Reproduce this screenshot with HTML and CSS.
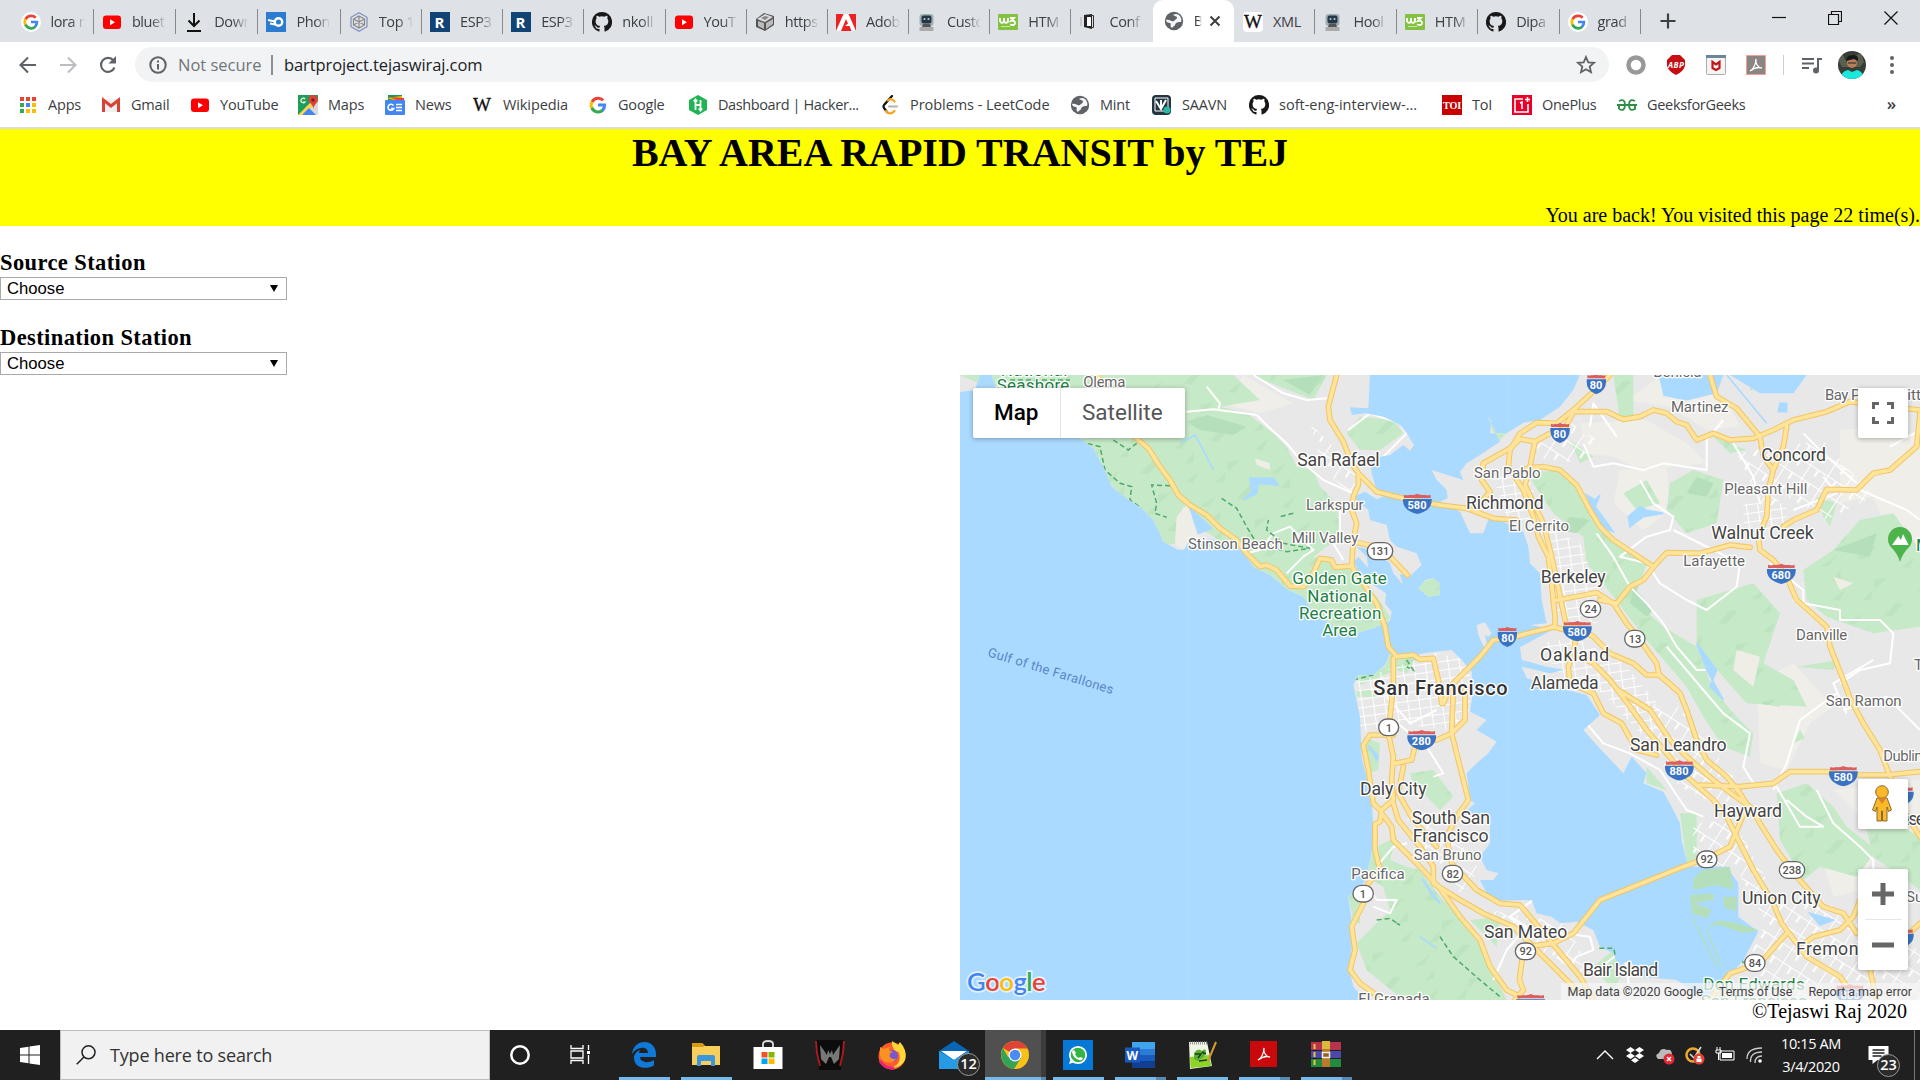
FILE: index.html
```html
<!DOCTYPE html>
<html lang="en">
<head>
<meta charset="utf-8">
<title>BART</title>
<link rel="stylesheet" href="styles.css">
</head>
<body>
<svg class="defs" width="0" height="0">
  <symbol id="google" viewBox="0 0 20 20"><g fill="none" stroke-width="3"><path d="M15.2 5.2A7 7 0 0 0 4 7" stroke="#ea4335"/><path d="M4 6.6a7 7 0 0 0 0 6.6" stroke="#fbbc05"/><path d="M3.8 13a7 7 0 0 0 11 2.2" stroke="#34a853"/><path d="M10 10h6.6a7 7 0 0 1-2.2 5.4" stroke="#4285f4"/></g></symbol>
  <symbol id="googleDisc" viewBox="0 0 20 20"><circle cx="10" cy="10" r="10" fill="#fff"/><use href="#google" x="1" y="1" width="18" height="18"/></symbol>
  <symbol id="youtube" viewBox="0 0 20 20"><rect x="1" y="3.500" width="18" height="13.500" rx="3" fill="#f00"/><path d="M8 7.300v6l5-3z" fill="#fff"/></symbol>
  <symbol id="download" viewBox="0 0 20 20"><path d="M10 1v13M4.500 8.500L10 14l5.500-5.500M3 19h14" fill="none" stroke="#111" stroke-width="2"/></symbol>
  <symbol id="phone" viewBox="0 0 20 20"><path fill="#2b7bd0" d="M0 0h20v20H0z"/><circle cx="12.500" cy="10" r="3.700" fill="none" stroke="#fff" stroke-width="2.400"/><path d="M2 8l7 1.500M4 11.500l5 1" stroke="#fff" stroke-width="2"/></symbol>
  <symbol id="hex" viewBox="0 0 20 20"><g fill="none" stroke="#7f8ebc" stroke-width="1.200"><path d="M10 .7l8 4.600v9.400l-8 4.600-8-4.600V5.300z"/><path d="M10 4l5.500 3v6L10 16l-5.500-3V7zM10 4v12M4.500 7l11 6M15.500 7l-11 6" stroke="#888"/></g></symbol>
  <symbol id="r" viewBox="0 0 20 20"><path fill="#0f4474" d="M0 0h20v20H0z"/><text x="4.500" y="15.500" class="r-letter">R</text></symbol>
  <symbol id="github" viewBox="0 0 20 20"><path fill="#191717" d="M10 0a10 10 0 0 0-3.200 19.500c.6.100.700-.3.700-.6v-2c-2.900.6-3.500-1.200-3.500-1.200-.5-1.200-1.100-1.500-1.100-1.500-.9-.6 0-.6 0-.6 1 .1 1.600 1 1.600 1 .9 1.600 2.400 1.100 3 .9.1-.7.400-1.100.6-1.400-2.300-.3-4.500-1.200-4.500-5 0-1 .3-2 1-2.700-.1-.3-.5-1.300.1-2.700 0 0 .8-.3 2.700 1a9.600 9.600 0 0 1 5 0c2-1.300 2.800-1 2.800-1 .6 1.400.2 2.400.1 2.700.7.700 1 1.600 1 2.700 0 3.800-2.300 4.700-4.500 5 .4.300.7.900.7 1.800v3c0 .3.200.7.700.6A10 10 0 0 0 10 0z"/></symbol>
  <symbol id="cube" viewBox="0 0 20 20"><path d="M1 7l8-6 10 3v9l-9 6-9-4z" fill="#555"/><path d="M2 7l8-5 8 3-8 5z" fill="#ddd"/><path d="M3 9l6 2v6l-6-3zM11 11l7-4v5l-7 5z" fill="#bbb"/><path d="M6 6l4-2 4 1-4 3z" fill="#888"/></symbol>
  <symbol id="adobe" viewBox="0 0 20 20"><path fill="#ed2224" d="M0 2h20v17H0z"/><path d="M0 19L7.500 2h5L20 19h-4.500l-2-5H9l3-2.500L10 7 5 19z" fill="#fff"/></symbol>
  <symbol id="robot" viewBox="0 0 20 20"><rect x="2.500" y="2" width="14" height="12" rx="3" fill="#9eb0b5"/><rect x="4.500" y="3.500" width="10" height="8" rx="2" fill="#263645"/><circle cx="7.500" cy="7" r="1.100" fill="#9ed2e0"/><circle cx="11.500" cy="7" r="1.100" fill="#9ed2e0"/><path d="M2.500 15h14v4h-14z" fill="#aaa"/><path d="M6 12h7l1 3H5z" fill="#555"/></symbol>
  <symbol id="w3" viewBox="0 0 20 20"><rect y="2" width="20" height="16" rx="1" fill="#83c140"/><path d="M2 6v3q2 4 4 0V6v3q2 4 4 0V6M12 6h4l-3 3q4-1 4 2t-5 1.500" fill="none" stroke="#fff" stroke-width="1.800"/><path d="M3 14.500h9" stroke="#cbe6ab" stroke-width="1"/></symbol>
  <symbol id="conf" viewBox="0 0 20 20"><path d="M5 3l8-1v15l-8-2z" fill="#222"/><path d="M8 5h4v9H8z" fill="#fff"/><path d="M12 3.500h2.500v12H12" fill="none" stroke="#333"/><path d="M2 5v9" stroke="#aaa" stroke-width="1"/></symbol>
  <symbol id="globe" viewBox="0 0 20 20"><circle cx="10" cy="10" r="9.200" fill="#5f6368"/><path d="M2 9c4-1 5 2 8 1 1-2 3-1 3-4l-4-2c3-2 5-1 7 1 1 2 2 4 1 6-3 0-5 0-6 3-1 2-2 1-3 3-3-2 0-4-2-5-2 0-4-1-4-3z" fill="#f5f6f7"/></symbol>
  <symbol id="wiki" viewBox="0 0 20 20"><text x="0" y="16" class="w-letter" textLength="19">W</text></symbol>
  <symbol id="wikiTile" viewBox="0 0 20 20"><rect width="20" height="20" rx="4" fill="#fff"/><text x="1" y="16" class="w-letter" textLength="18">W</text></symbol>
  <symbol id="apps" viewBox="0 0 20 20"><path d="M2 2h4v4H2zM8 2h4v4H8zM14 2h4v4h-4z" fill="#ea4335"/><path d="M2 8h4v4H2z" fill="#34a853"/><path d="M8 8h4v4H8z" fill="#4285f4"/><path d="M14 8h4v4h-4zM8 14h4v4H8zM14 14h4v4h-4z" fill="#fbbc05"/><path d="M2 14h4v4H2z" fill="#34a853"/></symbol>
  <symbol id="gmail" viewBox="0 0 20 20"><path d="M1 4h18v13H1z" fill="#f0f0f0"/><path d="M2.500 17V5l7.500 6 7.500-6v12" fill="none" stroke="#d94235" stroke-width="3"/></symbol>
  <symbol id="maps" viewBox="0 0 20 20"><path fill="#1e9e57" d="M0 0h20v20H0z"/><path d="M20 4v16h-4L8 12z" fill="#dadada"/><path d="M0 20L16 4l3 3L6 20z" fill="#fdd454"/><path d="M4 20l7-7 7 7z" fill="#4285f4"/><path d="M15 0a5 5 0 0 1 5 5c0 3-4 4-4.500 9C15 9 10.500 8 10.500 5A5 5 0 0 1 15 0z" fill="#db4437"/><circle cx="15" cy="5" r="1.700" fill="#7b231e"/><path d="M7 4a2.300 2.300 0 1 0 0 3H5" fill="none" stroke="#fff" stroke-width="1.200"/></symbol>
  <symbol id="news" viewBox="0 0 20 20"><path d="M3 0h14v6H3z" fill="#0f9d58"/><path d="M1 3l16-2v6z" fill="#fbbc04"/><path d="M4 2l15 1v5z" fill="#ea4335"/><rect y="5" width="20" height="15" rx="1" fill="#4285f4"/><path d="M8.500 10.500a3 3 0 1 0 .3 3H6M11 9.500h6M11 12.500h6M11 15.500h6" fill="none" stroke="#fff" stroke-width="1.600"/></symbol>
  <symbol id="hacker" viewBox="0 0 20 20"><path d="M10 0l9 5v10l-9 5-9-5V5z" fill="#1fb554"/><path d="M7.500 5v10M12.500 5v10M7.500 10h5M5.800 6.500L7.500 4.500l1.700 2M10.800 13.500l1.700 2 1.700-2" fill="none" stroke="#fff" stroke-width="1.800"/></symbol>
  <symbol id="leet" viewBox="0 0 20 20"><g fill="none" stroke-width="2.200" stroke-linecap="round"><path d="M12 1L4 10q-1 1.500 0 3l3 4" stroke="#111"/><path d="M8 5.500q3-3 6.500 1M6 16q4 5 8.500 0" stroke="#ffa116"/><path d="M9 11.500h8" stroke="#b3b3b3"/></g></symbol>
  <symbol id="saavn" viewBox="0 0 20 20"><rect width="19" height="20" rx="4" fill="#223641"/><path d="M3 3h13v13H3z" fill="none" stroke="#fff"/><path d="M4 6l5 8 5-9M9 5v7" fill="none" stroke="#fff" stroke-width="2"/><circle cx="15" cy="15" r="3.500" fill="#2bb9a5"/></symbol>
  <symbol id="toi" viewBox="0 0 20 20"><path fill="#c80000" d="M0 0h20v20H0z"/><text x="1" y="14" class="toi-text" textLength="18" lengthAdjust="spacingAndGlyphs">TOI</text></symbol>
  <symbol id="oneplus" viewBox="0 0 20 20"><path fill="#eb0029" d="M0 0h20v20H0z"/><path d="M11 4H3v13h13V9M8 8l2-1v7M15.500 2v5M13 4.500h5" fill="none" stroke="#fff" stroke-width="1.600"/></symbol>
  <symbol id="gfg" viewBox="0 0 20 20"><path d="M0 10h20M2 6q6-3 6 4t-6 4M18 6q-6-3-6 4t6 4v-4M2 14v-4" fill="none" stroke="#2f8d46" stroke-width="1.900"/></symbol>
  <symbol id="acro" viewBox="0 0 20 20"><path d="M4 16c3-1 6-7 6-12-1 4 2 9 6 9-3-1-8 0-12 3z" fill="none" stroke="#fff" stroke-width="1.300"/></symbol>

  <symbol id="interstate" viewBox="0 0 88 62"><path d="M1 17h86q3 34-43 45Q-2 51 1 17z" fill="#3b73c4"/><path d="M4 4q10 3 18 0 10 3 22-3 12 6 22 3 8 3 18 0v10H4z" fill="#db5f5f"/></symbol>
  <symbol id="interstateNarrow" viewBox="0 0 60 62"><path d="M1 17h58q3 34-29 45Q-2 51 1 17z" fill="#3b73c4"/><path d="M3 4q7 3 13 0 7 3 14-3 7 6 14 3 6 3 13 0v10H3z" fill="#db5f5f"/></symbol>
</svg>

<header class="browser">
  <nav class="tabs">
    <div class="tab"><svg><use href="#googleDisc"/></svg><span>lora m</span></div>
    <div class="tab"><svg><use href="#youtube"/></svg><span>bluet</span></div>
    <div class="tab"><svg><use href="#download"/></svg><span>Down</span></div>
    <div class="tab"><svg><use href="#phone"/></svg><span>Phon</span></div>
    <div class="tab"><svg><use href="#hex"/></svg><span>Top 1</span></div>
    <div class="tab"><svg><use href="#r"/></svg><span>ESP3</span></div>
    <div class="tab"><svg><use href="#r"/></svg><span>ESP3</span></div>
    <div class="tab"><svg><use href="#github"/></svg><span>nkoll</span></div>
    <div class="tab"><svg><use href="#youtube"/></svg><span>YouT</span></div>
    <div class="tab"><svg><use href="#cube"/></svg><span>https</span></div>
    <div class="tab"><svg><use href="#adobe"/></svg><span>Adob</span></div>
    <div class="tab"><svg><use href="#robot"/></svg><span>Custo</span></div>
    <div class="tab"><svg><use href="#w3"/></svg><span>HTM</span></div>
    <div class="tab last"><svg><use href="#conf"/></svg><span>Conf</span></div>
    <div class="tab active"><svg><use href="#globe"/></svg><span>B</span><svg class="x" viewBox="0 0 12 12"><path d="M1.500 1.500l9 9M10.500 1.500l-9 9"/></svg></div>
    <div class="tab"><svg><use href="#wikiTile"/></svg><span class="whole">XML</span></div>
    <div class="tab"><svg><use href="#robot"/></svg><span>Hool</span></div>
    <div class="tab"><svg><use href="#w3"/></svg><span>HTM</span></div>
    <div class="tab"><svg><use href="#github"/></svg><span>Dipa</span></div>
    <div class="tab"><svg><use href="#googleDisc"/></svg><span>grad</span></div>
    <svg class="plus" viewBox="0 0 16 16"><path d="M8 .5v15M.5 8h15"/></svg>
    <div class="window-buttons">
      <svg viewBox="0 0 14 14"><path d="M0 6.500h14"/></svg>
      <svg viewBox="0 0 14 14"><path d="M.5 3.500h10v10H.5zM3.500 3V.5h10v10H11"/></svg>
      <svg viewBox="0 0 14 14"><path d="M.5.5l13 13M13.500.5l-13 13"/></svg>
    </div>
  </nav>

  <div class="toolbar">
    <svg class="nav" viewBox="0 0 18 18"><path d="M17 9H2M9 1.500L1.500 9 9 16.500"/></svg>
    <svg class="nav dim" viewBox="0 0 18 18"><path d="M1 9h15M9 1.500L16.500 9 9 16.500"/></svg>
    <svg class="nav" viewBox="0 0 18 18"><path d="M15.500 11.500A7 7 0 1 1 14.500 4.500"/><path d="M17 0v7.500H9.500z" class="solid"/></svg>
    <div class="address">
      <svg class="info" viewBox="0 0 18 18"><circle cx="9" cy="9" r="7.700"/><path d="M9 8v5.500M9 4.500v2"/></svg>
      <span class="insecure">Not secure</span><i></i><span class="url">bartproject.tejaswiraj.com</span>
      <svg class="star" viewBox="0 0 20 20"><path d="M10 2l2.300 5.300 5.700.5-4.300 3.800 1.300 5.600-5-3-5 3 1.300-5.600L2 7.800l5.700-.5z"/></svg>
    </div>
    <div class="extensions">
      <svg viewBox="0 0 20 20"><circle cx="10" cy="10" r="7.500" fill="none" stroke="#999" stroke-width="4.500"/></svg>
      <svg viewBox="0 0 20 20"><path d="M6 0h8l5 5v6q-2 6-9 9-7-3-9-9V5z" fill="#c70d12"/><text x="2" y="13" class="abp" textLength="16">ABP</text></svg>
      <svg viewBox="0 0 20 20"><rect x=".5" y=".5" width="19" height="19" rx="1" fill="#f4f4f4" stroke="#aaa"/><path d="M0 0h20v3H0z" fill="#6b8797"/><path d="M6.500 7v6l3.500 2 3.500-2V7L10 9.500z" fill="none" stroke="#c01818" stroke-width="2.200"/></svg>
      <svg viewBox="0 0 20 20"><path d="M.5.5h19v19H.5z" fill="#8c8585" stroke="#f2a090"/><use href="#acro"/></svg>
    </div>
    <i class="rule"></i>
    <svg class="queue" viewBox="0 0 20 20"><path d="M0 4h12M0 8.500h12M0 13h7M16 15V4h4" fill="none" stroke="#5f6368" stroke-width="2"/><circle cx="14" cy="15.500" r="3" fill="#5f6368"/></svg>
    <svg class="avatar" viewBox="0 0 28 28"><clipPath id="round"><circle cx="14" cy="14" r="14"/></clipPath><g clip-path="url(#round)"><path d="M0 0h28v28H0z" fill="#343e34"/><path d="M0 8l5-4 3 6 5-7 4 2 6-3 3 9-4 5H4z" fill="#59604e"/><circle cx="14" cy="12" r="5" fill="#b77e5c"/><path d="M8 10q1-7 7-6 6 0 5 6l-4-2z" fill="#181818"/><path d="M10 12h8" stroke="#222" stroke-width="1.200"/><path d="M3 28q0-8 7-9l4 2 5-2q6 1 7 9z" fill="#19e8dc"/></g></svg>
    <svg class="dots" viewBox="0 0 4 18"><circle cx="2" cy="2" r="2"/><circle cx="2" cy="9" r="2"/><circle cx="2" cy="16" r="2"/></svg>
  </div>

  <div class="bookmarks">
    <a><svg><use href="#apps"/></svg>Apps</a>
    <a><svg><use href="#gmail"/></svg>Gmail</a>
    <a><svg><use href="#youtube"/></svg>YouTube</a>
    <a><svg><use href="#maps"/></svg>Maps</a>
    <a><svg><use href="#news"/></svg>News</a>
    <a><svg><use href="#wiki"/></svg>Wikipedia</a>
    <a><svg><use href="#google"/></svg>Google</a>
    <a><svg><use href="#hacker"/></svg>Dashboard | Hacker...</a>
    <a><svg><use href="#leet"/></svg>Problems - LeetCode</a>
    <a><svg><use href="#globe"/></svg>Mint</a>
    <a><svg><use href="#saavn"/></svg>SAAVN</a>
    <a><svg><use href="#github"/></svg>soft-eng-interview-...</a>
    <a><svg><use href="#toi"/></svg>ToI</a>
    <a><svg><use href="#oneplus"/></svg>OnePlus</a>
    <a><svg><use href="#gfg"/></svg>GeeksforGeeks</a>
    <b>»</b>
  </div>
</header>

<main class="page">
  <div class="banner">
    <h1>BAY AREA RAPID TRANSIT by TEJ</h1>
    <p>You are back! You visited this page 22 time(s).</p>
  </div>
  <div class="field">
    <h3>Source Station</h3>
    <div class="select"><span>Choose</span><i></i></div>
  </div>
  <div class="field">
    <h3>Destination Station</h3>
    <div class="select"><span>Choose</span><i></i></div>
  </div>

  <div class="map">
    <svg class="tiles" viewBox="0 15 2880 1875">
      <defs>
        <pattern id="grid" width="34" height="26" patternUnits="userSpaceOnUse" patternTransform="rotate(-8)"><path d="M0 0h34M0 0v26" stroke="#fff" stroke-width="6" fill="none"/></pattern>
        <pattern id="gridWide" width="62" height="48" patternUnits="userSpaceOnUse" patternTransform="rotate(33)"><path d="M0 0h62M0 0v48M30 0v24" stroke="#fff" stroke-width="6" fill="none"/></pattern>
        <pattern id="relief" width="230" height="190" patternUnits="userSpaceOnUse" patternTransform="rotate(-25)"><path d="M10 20l50-12-30 24zM90 60l45-16-20 26zM20 105l60-9-38 20zM150 20l40 10-50 16zM130 130l50-20 20 12-50 20zM30 160l40-20-10 26z" fill="#b3dfb8" opacity=".5"/></pattern>
        <clipPath id="landClip"><use href="#landShape"/></clipPath>
        <path id="landShape" d="M0 15H60L45 60 0 66ZM95 15L110 60 250 160 360 205 400 235 435 300 455 350 500 385 545 415 580 450 600 490 610 515 655 540 672 538 685 515 750 508 800 515 850 545 880 590 930 615 985 660 1030 680 1060 730 1110 760 1130 785 1180 792 1240 775 1290 752 1295 725 1275 700 1278 670 1240 645 1195 605 1182 575 1195 560 1225 595 1220 560 1190 530 1240 540 1290 580 1300 610 1330 645 1318 612 1350 618 1385 585 1370 550 1310 530 1290 510 1280 465 1230 450 1225 420 1200 400 1180 380 1215 365 1250 388 1280 375 1250 360 1235 310 1230 265 1290 255 1330 225 1350 242 1362 225 1340 190 1320 165 1270 140 1215 130 1175 135 1170 112 1225 115 1230 15Z
        M1180 945L1195 915 1240 915 1275 885 1290 850 1330 862 1400 848 1475 840 1505 870 1535 905 1540 960 1530 1025 1580 1050 1550 1080 1610 1115 1585 1150 1550 1180 1520 1210 1530 1290 1545 1300 1510 1330 1590 1345 1590 1420 1560 1460 1580 1500 1615 1510 1600 1530 1560 1530 1580 1570 1610 1592 1715 1590 1730 1630 1775 1640 1800 1660 1850 1655 1900 1680 1920 1730 1960 1750 1975 1790 2010 1770 2040 1820 2150 1830 2240 1890 1215 1890 1180 1850 1168 1800 1178 1710 1175 1650 1165 1580 1215 1535 1235 1450 1240 1365 1235 1290 1205 1160 1200 1040Z
        M1860 15L1840 60 1800 110 1740 150 1690 158 1640 190 1590 190 1595 155 1583 138 1620 215 1560 255 1520 280 1500 305 1510 330 1415 300 1430 330 1460 360 1463 385 1440 395 1500 425 1530 490 1570 490 1590 435 1640 460 1690 485 1705 530 1710 580 1740 610 1745 690 1760 760 1710 765 1780 778 1720 810 1680 832 1685 870 1760 890 1815 900 1770 910 1685 890 1700 925 1790 952 1880 975 1920 1035 1870 1080 1915 1130 1990 1210 2015 1160 2060 1210 2050 1240 2110 1265 2135 1310 2160 1360 2165 1410 2175 1450 2185 1490 2300 1490 2335 1540 2335 1640 2395 1685 2350 1770 2300 1830 2240 1890H2880V15H2540L2500 70 2400 70 2310 15H2290L2270 70 2180 92 2110 78 2095 15Z
        M1550 765L1575 757 1595 790 1585 800 1575 795 1582 830 1570 828 1555 795ZM1375 655L1395 630 1420 625 1438 640 1440 675 1405 680Z"/>
        <g id="parks">
          <path d="M0 15H820L900 90 780 110 860 130 940 190 980 230 1010 290 1060 300 1080 350 1130 400 1140 500 1060 560 1170 600 1250 680 1290 740 1260 800 1040 800 940 640 850 560 700 460 670 410 650 450 650 520 600 530 340 200 100 60ZM870 15H1100L1060 90 960 50ZM1160 190L1200 140 1300 150 1330 190 1260 240 1200 240ZM1370 640L1440 620V690H1370Z"/>
          <path d="M1180 910L1275 890 1290 850 1370 865 1340 910 1310 900 1200 945ZM1210 1100L1260 1120 1255 1200 1225 1210ZM1350 1210L1420 1200 1480 1280 1440 1320 1360 1240ZM1190 960H1260V980H1190ZM1230 1440L1310 1400 1290 1470 1340 1490 1380 1500 1440 1580 1520 1660 1580 1760 1640 1890H1330L1220 1800 1190 1720 1290 1620 1270 1550 1220 1520ZM1530 1650L1620 1640 1610 1730 1570 1690ZM1165 1570H1200V1660H1180Z"/>
          <path d="M1580 130L1640 190 1610 220ZM1700 310L1790 300 1860 360 1900 450 1980 520 2060 580 2040 640 2020 690 2110 770 2210 830 2260 960 2330 1040 2380 1090 2370 1160 2290 1130 2230 1040 2180 950 2060 810 1960 680 1880 580 1870 500 1780 430ZM2130 340L2200 300 2290 330 2270 460 2180 490 2120 420ZM2210 690L2380 640 2460 730 2410 880 2500 930 2540 1010 2360 1000 2210 830ZM2530 600L2620 540 2700 450 2800 430 2880 540V770L2740 790 2600 740 2540 690ZM2450 1270L2540 1240 2620 1310 2660 1370 2750 1440 2690 1520 2580 1490 2530 1530 2460 1410ZM2700 1300L2880 1400V1560L2740 1460ZM1960 15H2020V150H1980ZM1830 210L1900 260 1860 280ZM2160 1330H2210V1480H2180ZM2310 1700L2380 1690 2340 1780ZM2060 1190L2120 1260 2060 1240Z"/>
          <path d="M1990 370L2060 330 2100 400 2030 420ZM2260 200L2360 240 2310 250ZM2570 380L2630 400 2610 470 2590 440ZM2380 25L2430 50 2370 60ZM2510 890L2640 870 2620 900ZM2390 1000L2470 980 2460 1010ZM2500 1120L2520 1080 2535 1105ZM1900 1790L1960 1740 2000 1790 1960 1860Z"/>
        </g>
        <g id="roadLines" fill="none" stroke-linejoin="round" stroke-linecap="round">
          <path d="M415 15L430 100 530 205 565 235 600 290 630 330 655 375 690 405 740 435 780 475 830 510 860 550 900 590 918 585 950 600 990 648 1030 650 1060 610 1080 565 1115 570 1125 592 1175 588"/>
          <path d="M1130 15L1118 60 1105 110 1110 150 1150 215 1175 280 1195 310 1195 345 1180 380 1175 420 1190 460 1180 510 1175 590 1210 640 1250 700 1275 770 1285 830 1310 860 1360 855 1380 868 1420 865 1435 930 1445 1000M1180 515L1250 530 1295 565 1342 615M1195 310L1250 365 1330 385 1440 405 1520 415 1600 445 1670 450M1300 865V950L1285 1090 1300 1160"/>
          <path d="M1950 15L1905 60 1840 120 1790 160 1730 158 1680 190 1650 240 1645 290 1690 360 1720 440 1735 500 1765 560 1775 640 1785 740 1785 770 1720 785 1650 805 1600 810 1560 860 1510 910 1470 950 1450 1000"/>
          <path d="M1840 125L1815 175 1770 190 1725 215 1710 290 1695 345 1750 460 1775 560 1800 680 1820 770M1725 215L1680 207 1650 235 1570 280 1565 330 1590 365 1560 400M1840 125L1940 125 1990 148 2040 140 2080 120 2120 130 2150 155 2180 165 2210 210 2260 190 2310 210 2380 205 2440 180 2500 150 2600 125 2670 95 2780 110 2880 120"/>
          <path d="M2250 15L2270 80 2330 115 2400 200 2410 260 2440 300 2425 360 2420 440 2395 500 2400 540 2440 570 2480 620 2510 690 2600 770 2610 830 2650 930 2670 985 2710 1060 2760 1140 2790 1220 2830 1320 2880 1400M2480 170L2470 230 2440 300M2880 130L2870 230 2790 300 2740 310 2690 360 2600 358 2570 420 2500 450 2470 470"/>
          <path d="M2370 532L2310 525 2220 550 2120 548 2090 580 2050 630 2010 650 1970 700 1920 690M1700 295L1750 290 1800 300 1850 345 1890 420 1920 470 1960 510 2020 550 2080 590M1780 693L1830 683 1910 668 1960 700 2000 760 2040 810 2090 880 2097 915 2150 960"/>
          <path d="M1820 770L1850 770 1900 800 1950 850 2020 880 2060 915 2100 915 2160 970 2180 1020 2210 1110 2240 1170 2300 1220 2340 1270 2365 1310M2220 1245L2340 1250 2440 1240 2490 1205 2600 1205 2660 1215 2780 1215 2880 1205"/>
          <path d="M1780 770L1850 790 1840 850 1900 880 1950 930 2010 1010 2060 1080 2120 1150 2170 1210 2260 1290 2300 1340 2330 1400 2380 1500 2440 1600 2465 1660 2540 1760 2640 1820 2690 1890M1975 960L2070 1020 2130 1110 2180 1160 2260 1230 2320 1275 2370 1310 2400 1360 2450 1440 2510 1520 2590 1610 2650 1630 2690 1690M1840 850L1825 890 1830 940 1900 970 1930 1030 1985 1060 2030 1140 2090 1155"/>
          <path d="M1700 1730L1780 1720 1840 1690 1920 1590 2170 1490 2240 1465 2310 1430 2360 1310M2250 1890L2310 1810 2400 1780 2480 1690M2540 1715L2560 1700 2640 1680 2680 1640 2700 1590M2880 1660L2730 1800 2750 1890"/>
          <path d="M1300 1095L1230 1095 1210 1125 1225 1200 1240 1300 1260 1320M1300 1160L1295 1230 1300 1290 1265 1320 1260 1355 1245 1362 1245 1440 1260 1500 1225 1540M1365 1130L1355 1170 1305 1180M1265 1330L1295 1370 1300 1410 1380 1490 1440 1555 1500 1640 1560 1710 1590 1790 1640 1860 1670 1875M1330 1190L1315 1270 1360 1350 1430 1430M1430 1110L1475 1090 1515 1050 1515 960"/>
          <path d="M1480 960L1475 1090 1500 1190 1525 1290 1490 1340 1460 1400 1475 1480 1550 1560 1620 1600 1680 1605 1760 1700 1860 1820 1900 1890M1300 1300L1315 1350 1380 1430 1420 1490 1420 1540 1500 1590 1570 1630 1660 1670 1730 1740 1850 1860M1210 1600L1175 1670 1185 1740 1170 1800 1200 1840 1270 1890M1690 1740L1678 1830 1690 1860 1665 1890"/>
        </g>
      </defs>
      <path d="M0 15H2880V1890H0Z" fill="#aadaff"/>
      <path d="M685 15V1890M1646 15V1890" stroke="#b5defb" stroke-width="3"/>
      <use href="#landShape" fill="#e8e8e8"/>
      <g clip-path="url(#landClip)">
        <g fill="#f0eee9">
          <path d="M1860 160L2060 150 2180 220 2240 280 2120 290 2020 290 1960 260 1880 250ZM2100 20L2300 90 2340 170 2240 180 2130 110 2000 90ZM2640 180L2780 170 2880 200V520L2780 480 2740 380 2640 400ZM2390 940L2500 880 2620 1010 2550 1060 2480 1200 2400 1180ZM2620 1260L2880 1230V1420L2740 1380ZM2580 1450L2740 1460 2700 1560 2620 1580ZM1980 300L2120 290 2130 420 2050 480 1960 400ZM2270 700L2400 680 2440 760 2400 860 2300 820Z"/>
          <path d="M850 15L1000 100 900 130 780 100Z"/>
        </g>
        <use href="#parks" fill="#c6e9c7"/>
        <use href="#parks" fill="url(#relief)"/>
        <path d="M650 440L680 405 700 440 720 500 670 540 645 520ZM885 265L930 280 930 300 890 285ZM2330 840L2400 860 2380 950 2320 900ZM2620 620L2680 640 2640 660Z" fill="#efeee6"/>
        <g fill="#b4dfba"><path d="M680 155L740 135 860 170 820 195 720 180ZM970 30L1090 15 1050 75ZM1830 440L1890 450 1850 490 1800 480ZM2020 650L2080 720 2060 740 2010 700ZM2620 540L2750 490 2730 560ZM2210 320L2260 340 2240 380 2180 370Z"/></g>
        <g fill="url(#grid)"><path d="M1190 930L1430 850 1530 870 1530 1020 1470 1080 1300 1060 1200 1090ZM1600 320L1700 310 1760 470 1860 520 1920 660 1910 760 1790 740 1740 480 1640 440ZM1740 820L1840 800 1990 880 2100 1010 2080 1130 1930 970 1800 920ZM2350 400H2480V480H2350Z"/></g>
        <g fill="url(#gridWide)"><path d="M2080 1000L2160 1010 2320 1220 2300 1320 2160 1250 2080 1150ZM2200 1360L2320 1350 2460 1600 2420 1660 2320 1480 2290 1490 2200 1450ZM2440 1600L2560 1570 2680 1650 2880 1740V1890H2440L2370 1760ZM2330 250L2590 210 2740 380 2600 450 2480 380 2410 420ZM1330 1330L1450 1350 1560 1500 1500 1570 1400 1450ZM1590 1620L1820 1660 1900 1830 1730 1740 1620 1680ZM1050 160L1130 240 1220 320 1170 370 1090 300ZM1900 60L1840 190 1910 200 1870 280 1700 260Z"/></g>
        <g fill="none" stroke="#fff" stroke-width="6" stroke-linejoin="round">
          <path d="M680 125L760 118 890 135 930 175 980 220 1030 280 1090 330 1180 370M740 50L780 100 775 120M880 15L970 70 1040 90 1100 85M1165 180L1230 130 1320 160 1340 190 1270 260 1180 280M1140 400V480L1120 520 1150 570M980 610L1030 560 1060 540 1040 520 990 470 940 490 900 540 860 550"/>
          <path d="M1870 220L1900 290 1960 280 2050 300 2110 280 2240 300 2240 210 2290 150M2040 330L2080 400 2140 440 2130 480 2060 500 1980 560 2060 580 2100 640 2180 690 2240 720 2330 650 2340 580 2260 540 2140 480M1910 490L1960 560 2010 650 2060 700 2110 760 2150 830 2210 900 2270 900M2320 220L2380 320 2400 400M2530 190L2590 250 2690 340M2590 320L2630 370 2500 420M2430 580L2530 660 2530 700 2640 720 2640 750 2760 750 2800 790 2790 880 2700 900 2640 940M2500 690L2580 760M2790 230L2880 180M2700 360L2840 420 2880 450"/>
          <path d="M2120 830L2230 960 2290 1030 2370 1090 2350 1190 2380 1240M2630 970L2520 1050 2480 1180 2440 1260M2480 1290L2540 1340 2590 1370 2520 1370 2450 1250M2570 1260L2620 1360 2700 1430 2740 1470V1540M2740 870L2620 940 2660 1030M1720 1590L1650 1640 1700 1670 1640 1740 1600 1830M1810 1690L1890 1700 1900 1740 1850 1760 1830 1790 1790 1760M1900 1810L1950 1770 1990 1740 2010 1860M1225 1550L1250 1590 1310 1590 1290 1630 1240 1610M1250 1490L1300 1430 1340 1420M1880 980V1060L1930 1120 2010 1150 2100 1200 2180 1320 2230 1340M1280 980L1350 1060 1430 1020M1300 1050L1400 1130 1450 1210 1420 1220M1890 170L1900 100 1970 200M2650 1020L2780 980 2880 1080"/>
        </g>
        <g fill="#aadaff" stroke="#aadaff" stroke-width="5"><path d="M1880 375L1905 390 1920 375 1905 410 1935 450 1960 485 1920 470ZM2005 440L2040 410 2060 420 2110 430 2050 440 2010 470ZM870 325L940 325 955 345 895 340 890 370 850 390 875 365ZM690 415L755 475 715 490ZM2210 820L2270 900 2250 950 2290 990 2240 900ZM2460 100H2480V125H2455ZM1225 1125L1255 1160 1250 1170ZM1385 1525L1440 1600 1420 1580ZM2550 1630L2620 1650 2580 1665Z"/><path d="M660 220L705 195 730 240 760 300M1380 1700L1430 1735M2300 15L2420 160" fill="none"/></g>
        <g class="trail"><path d="M360 215L420 230 435 300 480 340 515 350 510 390 545 415M460 210L505 240 530 220M630 347L575 345 590 400 585 430 620 442M785 385L830 415 860 470 890 520 980 545 1050 535 970 520 920 480 925 450M1000 430L960 440M1250 1650L1290 1645 1320 1665 1310 1660M1440 1700L1480 1760 1560 1830 1620 1880M1340 870L1360 900 1340 890M1180 930L1240 915M2330 1720L2350 1780M150 30H330"/></g>
      </g>
      <path d="M2200 1525L2230 1500 2310 1490 2320 1560 2270 1545 2200 1560ZM2190 1575L2260 1570 2262 1590 2205 1600 2255 1620 2240 1645 2195 1630ZM2290 1580H2330V1625L2290 1610ZM2240 1670L2280 1650 2330 1660 2395 1680 2350 1690 2280 1665Z" fill="#b4dfba"/>
      <path d="M2195 1640L2270 1790M2240 1680L2285 1790" stroke="#b4dfba" stroke-width="4"/>
      <path d="M1918 1735H1962L1966 1762" class="trail"/>
      <use href="#roadLines" stroke="#f2c463" stroke-width="17"/>
      <use href="#roadLines" stroke="#ffe49a" stroke-width="11"/>

      <g class="shields">
        <use href="#interstateNarrow" x="1879" y="11" width="60" height="62"/><use href="#interstateNarrow" x="1770" y="157" width="60" height="62"/><use href="#interstate" x="1328" y="370" width="88" height="62"/><use href="#interstate" x="2420" y="580" width="88" height="62"/><use href="#interstateNarrow" x="1612" y="769" width="60" height="62"/><use href="#interstate" x="1808" y="752" width="88" height="62"/><use href="#interstate" x="1341" y="1079" width="88" height="62"/><use href="#interstate" x="2114" y="1170" width="88" height="62"/><use href="#interstate" x="2606" y="1187" width="88" height="62"/><use href="#interstate" x="2774" y="1248" width="88" height="62"/><use href="#interstate" x="2774" y="1674" width="88" height="62"/><use href="#interstate" x="1668" y="1871" width="88" height="62"/><use href="#interstate" x="2626" y="1842" width="88" height="62"/>
        <text x="1908" y="58">80</text><text x="1799" y="205">80</text><text x="1371" y="416">580</text><text x="2463" y="628">680</text><text x="1643" y="815">80</text><text x="1851" y="799">580</text><text x="1384" y="1125">280</text><text x="2157" y="1216">880</text><text x="2649" y="1233">580</text><text x="2670" y="1888">880</text>
      </g>
      <g class="routes">
        <rect x="1222" y="518" width="76" height="51" rx="25"/><rect x="1861" y="692" width="61" height="50" rx="25"/><rect x="1994" y="781" width="61" height="50" rx="25"/><rect x="1256" y="1047" width="60" height="50" rx="25"/><rect x="1179" y="1546" width="61" height="50" rx="25"/><rect x="1447" y="1486" width="61" height="50" rx="25"/><rect x="2210" y="1443" width="61" height="50" rx="25"/><rect x="2458" y="1475" width="76" height="50" rx="25"/><rect x="2354" y="1754" width="61" height="50" rx="25"/><rect x="1666" y="1719" width="61" height="50" rx="25"/>
        <text x="1260" y="556">131</text><text x="1892" y="730">24</text><text x="2025" y="819">13</text><text x="1287" y="1085">1</text><text x="1209" y="1583">1</text><text x="1478" y="1524">82</text><text x="2240" y="1480">92</text><text x="2496" y="1512">238</text><text x="2385" y="1791">84</text><text x="1697" y="1756">92</text>
      </g>
      <g class="labels">
        <g class="city">
          <text x="1012" y="288" textLength="247">San Rafael</text><text x="1518" y="418" textLength="233">Richmond</text><text x="2404" y="273" textLength="194">Concord</text><text x="2254" y="507" textLength="307">Walnut Creek</text><text x="1742" y="640" textLength="195">Berkeley</text><text x="1740" y="873" textLength="208">Oakland</text><text x="1712" y="957" textLength="204">Alameda</text><text x="2010" y="1143" textLength="290">San Leandro</text><text x="2262" y="1341" textLength="204">Hayward</text><text x="1200" y="1275" textLength="200">Daly City</text><text x="1355" y="1363" textLength="235">South San</text><text x="1358" y="1416" textLength="228">Francisco</text><text x="2346" y="1601" textLength="236">Union City</text><text x="1572" y="1704" textLength="250">San Mateo</text><text x="2508" y="1756" textLength="206">Fremont</text><text x="1869" y="1818" textLength="226">Bair Island</text><text x="2765" y="1365" textLength="130">Please</text>
        </g>
        <g class="town">
          <text x="370" y="51" textLength="126">Olema</text><text x="1038" y="420" textLength="173">Larkspur</text><text x="684" y="537" textLength="284">Stinson Beach</text><text x="995" y="518" textLength="200">Mill Valley</text><text x="1542" y="323" textLength="200">San Pablo</text><text x="1647" y="483" textLength="180">El Cerrito</text><text x="2133" y="125" textLength="172">Martinez</text><text x="2080" y="22" textLength="145">Benicia</text><text x="2595" y="91" textLength="130">Bay Po</text><text x="2842" y="91">itt</text><text x="2293" y="372" textLength="249">Pleasant Hill</text><text x="2170" y="588" textLength="185">Lafayette</text><text x="2508" y="809" textLength="154">Danville</text><text x="2862" y="899">T</text><text x="2597" y="1007" textLength="228">San Ramon</text><text x="2770" y="1174" textLength="118">Dublin</text><text x="2838" y="1595">Su</text><text x="1174" y="1527" textLength="160">Pacifica</text><text x="1361" y="1469" textLength="204">San Bruno</text><text x="1195" y="1903" textLength="214">El Granada</text>
        </g>
        <g class="park"><text x="997" y="642" textLength="283">Golden Gate</text><text x="1042" y="695" textLength="194">National</text><text x="1017" y="747" textLength="247">Recreation</text><text x="1087" y="799" textLength="104">Area</text><text x="110" y="62" textLength="218">Seashore</text><text x="122" y="18" textLength="200">National</text><text x="2230" y="1859" textLength="304">Don Edwards</text><text x="2222" y="1912" textLength="320">San Francisco</text><text x="2868" y="543">M</text></g>
        <text class="metro" x="1240" y="976" textLength="403">San Francisco</text>
        <text class="sea" transform="translate(81 858) rotate(17)" textLength="392">Gulf of the Farallones</text>
      </g>
      <path d="M2820 576Q2813 550 2792 530A36 36 0 1 1 2848 530Q2827 550 2820 576Z" fill="#4db34b"/><path d="M2796 525L2815 498 2823 510 2829 492 2846 525Z" fill="#fff"/>
      <text class="logo" x="21" y="1862" textLength="236"><tspan fill="#4285f4">G</tspan><tspan fill="#ea4335">o</tspan><tspan fill="#fbbc05">o</tspan><tspan fill="#4285f4">g</tspan><tspan fill="#34a853">l</tspan><tspan fill="#ea4335">e</tspan></text>
    </svg>
    <div class="map-type"><b>Map</b><span>Satellite</span></div>
    <div class="control full"><svg viewBox="0 0 22 22"><path d="M1.500 7V1.500H7M15 1.500h5.500V7M20.500 15v5.500H15M7 20.500H1.500V15"/></svg></div>
    <div class="control pegman"><svg viewBox="0 0 22 38"><path d="M6 13L1.500 25l3 1.500L6 22v14h4.500V26h1v10H16V22l1.500 4.500 3-1.500L16 13z"/><circle cx="11" cy="7" r="6.300"/><path d="M7 13h8l-4 6z" class="collar"/></svg></div>
    <div class="control zoom"><svg viewBox="0 0 22 22"><path d="M11 0v22M0 11h22"/></svg><i></i><svg viewBox="0 0 22 22"><path d="M0 11h22"/></svg></div>
    <div class="credits"><span>Map data ©2020 Google</span><span>Terms of Use</span><span>Report a map error</span></div>
  </div>
  <footer>©Tejaswi Raj 2020</footer>
</main>

<div class="taskbar">
  <div class="start"><svg viewBox="0 0 20 20"><path d="M0 3l8.500-1.300v7.800H0zM9.500 1.500L20 0v9.500H9.500zM0 10.500h8.500v7.800L0 17zM9.500 10.500H20V20L9.500 18.500z" fill="#fff"/></svg></div>
  <div class="search"><svg viewBox="0 0 20 20"><path d="M8 12L.7 19.300" /><circle cx="12.500" cy="7.300" r="6.500"/></svg><span>Type here to search</span></div>
  <div class="apps">
    <div><svg viewBox="0 0 30 30"><circle cx="15" cy="15" r="8.700" fill="none" stroke="#fff" stroke-width="2.500"/></svg></div>
    <div><svg viewBox="0 0 30 30"><path d="M6 5v3.500h12V5M6 24v-3.500h12V24M6 11h12v7H6zM23.500 5v5M23.500 15v9" fill="none" stroke="#fff" stroke-width="1.300"/><path d="M22 11h3v3h-3z" fill="#fff"/></svg></div>
    <div class="run"><svg viewBox="0 0 30 30"><path d="M3 14C4 6 9 2 15.500 2 23 2 27 8 27 14v3H11c0 5 8 7 14 3v5.500C17 30 5 28 5 18c0-4 3-7 6-8-1 2-1 3-1 3h9c0-7-11-7-16 1z" fill="#0f79d8"/></svg></div>
    <div class="run"><svg viewBox="0 0 30 30"><path d="M1 3h10l3 3h15v19H1z" fill="#f9cf5c"/><path d="M1 3h10l3 3-2 1H1z" fill="#d99a13"/><path d="M6 26V17q0-2 2-2h14q2 0 2 2v9h-4v-5H10v5z" fill="#3c96dc"/></svg></div>
    <div><svg viewBox="0 0 30 30"><path d="M.5 7h29v22H.500z" fill="#fff"/><path d="M10 7V4q0-3 5-3t5 3v3" fill="none" stroke="#ddd" stroke-width="1.800"/><path d="M8.500 12h6v5.500h-6z" fill="#f35325"/><path d="M15.500 12h6v5.500h-6z" fill="#7fba00"/><path d="M8.500 18.500h6V24h-6z" fill="#05a6f0"/><path d="M15.500 18.500h6V24h-6z" fill="#ffba08"/></svg></div>
    <div><svg viewBox="0 0 30 30"><path d="M1 0h28l-3 30H4z" fill="#0c0c0c"/><path d="M5 5l5 7 2 3 1-5 2 4 2-4 1 5 2-3 5-7-1 14-5 5-3-7h-2l-3 7-5-5z" fill="#777"/><path d="M1 1l1 12 3 13M29 1l-1 12-3 13" stroke="#b01a1a" stroke-width="1.800" fill="none"/></svg></div>
    <div><svg viewBox="0 0 30 30"><circle cx="15" cy="16" r="13.500" fill="#ff5d2a"/><path d="M15 1l6 4 2-3q7 8 5.500 16c-2 9-12 11-17 9 11 1 13-9 10-15-5-1-7-6-6.500-11z" fill="#ffd63a"/><circle cx="15" cy="16" r="6" fill="#7957cf"/><path d="M3 7l4 2 6-2c-2 2-1 4 3 5-5 1-5 8 3 7-4 6-15 4-16-4z" fill="#fa9222"/><path d="M3 21q5 8 14 7" stroke="#ea2379" stroke-width="3" fill="none"/></svg></div>
    <div class="mail"><svg viewBox="0 0 34 30"><path d="M2 11L17 1l15 10v18H2z" fill="#0865b8"/><path d="M4 11h26L17 20z" fill="#fff"/><path d="M2 11l15 9 15-9v18H2z" fill="#259be5"/></svg><em>12</em></div>
    <div class="run chrome"><svg viewBox="0 0 30 30"><circle cx="15" cy="15" r="14" fill="#fbc116"/><path d="M15 15L3 8A14 14 0 0 1 27.500 8.500H15z" fill="#df4335"/><path d="M3 8a14 14 0 0 0 11 21l7-11-6-3-7 2z" fill="#35a356"/><circle cx="15" cy="15" r="6.500" fill="#fff"/><circle cx="15" cy="15" r="5.300" fill="#4c8bf5"/></svg></div>
    <div class="run"><svg viewBox="0 0 30 30"><path fill="#0878d7" d="M0 0h30v30H0z"/><circle cx="15" cy="15" r="8.200" fill="#34b445" stroke="#fff" stroke-width="1.800"/><path d="M6 24l2-6 4 4z" fill="#fff"/><path d="M11 10l2 3-1 1q1 3 4 4l1-1 3 1q-1 3-4 2-6-2-7-8 0-2 2-2z" fill="#fff"/></svg></div>
    <div class="run multi"><svg viewBox="0 0 30 30"><path d="M7 2h23v7H7z" fill="#41a5ee"/><path d="M7 9h23v6H7z" fill="#2b7cd3"/><path d="M7 15h23v6H7z" fill="#185abd"/><path d="M7 21h23v7H7z" fill="#103f91"/><path d="M0 7.500h15v15H0z" fill="#185abd"/><text x="1.500" y="19.500" class="word">W</text></svg></div>
    <div class="run"><svg viewBox="0 0 30 30"><path d="M2 2h18l5 24-22 3z" fill="#f1f5e6"/><path d="M3 17l19-2 2.500 11-21 2z" fill="#8ed32a"/><path d="M3 3h17" stroke="#999" stroke-width="3" stroke-dasharray="1 1"/><path d="M7 13q4-6 8-2 4-4 4 1-1 5-5 7-5 4-7-1z" fill="#5cae3a"/><path d="M8 14h6l-3 4M15 12l4 2M12 21l8-1" stroke="#173f10" stroke-width="1.400" fill="none"/><path d="M29 2L21 21" stroke="#d99a2a" stroke-width="2"/></svg></div>
    <div class="run multi"><svg viewBox="0 0 30 30"><path fill="#c9090b" d="M1 1h27v26H1z"/><use href="#acro" x="4" y="4" width="22" height="20"/></svg></div>
    <div class="run multi"><svg viewBox="0 0 30 30"><path d="M0 2h30v8H0z" fill="#b8344c"/><path d="M0 11h30v7H0z" fill="#4b49a8"/><path d="M0 19h30v8H0z" fill="#238a3e"/><path d="M3.500 4v5M3.500 12v5M3.500 20v5" stroke="#f0c53b" stroke-width="2"/><path d="M11 1h8v26h-8z" fill="#b87a2c"/><path d="M11 1h8v8h-8z" fill="#dcb93c"/><path d="M11.500 12.500h7v5h-7z" fill="#96601e" stroke="#eee" stroke-width="1.500"/></svg></div>
  </div>
  <div class="tray">
    <svg viewBox="0 0 20 20"><path d="M2 14l8-8 8 8" fill="none" stroke="#fff" stroke-width="1.400"/></svg>
    <svg viewBox="0 0 20 20"><path d="M5.500 2L10 5 5.500 8 1 5zM14.500 2L19 5l-4.500 3L10 5zM5.500 8l4.500 3-4.500 3L1 11zM14.500 8l4.500 3-4.500 3-4.500-3zM10 12.500l4 2.700-4 2.800-4-2.800z" fill="#fff"/></svg>
    <svg viewBox="0 0 20 20"><path d="M3 14q-4-4 1-6 2-6 8-3 5-1 5 5v4z" fill="#bbb"/><circle cx="14" cy="14" r="5.500" fill="#e22831"/><path d="M12 12l4 4M16 12l-4 4" stroke="#fff" stroke-width="1.500"/></svg>
    <svg viewBox="0 0 20 20"><circle cx="8" cy="10" r="6.500" fill="none" stroke="#f0a92e" stroke-width="2.500"/><path d="M5 9l4 4 7-11" fill="none" stroke="#ddd" stroke-width="1.600"/><circle cx="14" cy="14" r="5.500" fill="#e44036"/><path d="M11.500 13.500h5V17h-5zM12.500 13v-2h3v2" fill="#fff"/></svg>
    <svg viewBox="0 0 20 20"><path d="M5 6h14v9H5z" fill="none" stroke="#fff"/><path d="M7 8h10v5H7z" fill="#fff"/><path d="M2 2v3M5 2v3M1 5h5v3H1zM3.500 8v7" fill="none" stroke="#fff"/></svg>
    <svg viewBox="0 0 20 20"><path d="M2 14Q2 3 17 3M5.500 17Q5 7 17 7M10 18q0-7 7-7" fill="none" stroke="#ccc" stroke-width="1.300"/><circle cx="15" cy="16" r="1.800" fill="#fff"/></svg>
  </div>
  <div class="clock"><span>10:15 AM</span><span>3/4/2020</span></div>
  <div class="notice"><svg viewBox="0 0 20 20"><path d="M0 1h20v14H9l-5 4v-4H0z" fill="#fff"/><path d="M4 5h12M4 8h12M4 11h9" stroke="#222" stroke-width="1.300"/></svg><em>23</em></div>
  <i class="peek"></i>
</div>
</body>
</html>
```
FILE: styles.css
```css
* { box-sizing: border-box; }
body {
  margin: 0;
  width: 1920px;
  height: 1080px;
  display: flex;
  flex-direction: column;
  overflow: hidden;
  background: #fff;
  font-family: "Liberation Serif", serif;
}
.defs { position: absolute; }
svg { flex: none; display: block; }

/* Browser window */
.browser {
  height: 129px;
  border-bottom: 2px solid #dadce0;
  font-family: "Open Sans", "Noto Sans", sans-serif;
  color: #3c4043;
}
.tabs {
  display: flex;
  height: 42px;
  padding-left: 12.5px;
  background: #dee1e6;
}
.tab {
  width: 81.4px;
  height: 25px;
  margin-top: 9px;
  padding-left: 8px;
  display: flex;
  align-items: center;
  border-right: 1.500px solid #85888d;
  font-size: 14.5px;
  line-height: 22px;
  letter-spacing: -.4px;
  flex: none;
}
.tab:nth-child(n+2):nth-child(-n+4) { width: 82.3px; }
.tab:nth-child(n+5):nth-child(-n+14) { width: 81.2px; }
.tab svg { width: 20px; height: 20px; margin-right: 10px; }
.tab span {
  width: 35px;
  overflow: hidden;
  white-space: nowrap;
  -webkit-mask-image: linear-gradient(90deg, #000 55%, transparent 98%);
  mask-image: linear-gradient(90deg, #000 55%, transparent 98%);
}
.tab .whole { -webkit-mask-image: none; mask-image: none; }
.tab.last { border-color: transparent; }
.tab.active {
  height: 42px;
  margin-top: 0;
  padding-left: 11px;
  background: #fff;
  border: 0;
  border-radius: 10px 10px 0 0;
}
.tab.active + .tab { padding-left: 9px; }
.tab.active span { width: 8px; }
.tab.active .x { width: 12px; height: 12px; margin: 0 0 0 7px; fill: none; stroke: #3c4043; stroke-width: 2; }
.plus { width: 16px; height: 16px; margin: 13px 0 0 19px; stroke: #3c4043; stroke-width: 2.2; }
.window-buttons {
  display: flex;
  gap: 42px;
  margin: 11px 22px 0 auto;
}
.window-buttons svg { width: 14px; height: 14px; fill: none; stroke: #111; stroke-width: 1.2; }
.r-letter { font: bold 15px "Open Sans", sans-serif; fill: #fff; }
.w-letter { font: 19px "Liberation Serif", serif; fill: #111; stroke: #111; stroke-width: .4px; }
.toi-text { font: bold 10px "Liberation Serif", serif; fill: #fff; }
.abp { font: bold italic 8px "Open Sans", sans-serif; fill: #fff; }

.toolbar { display: flex; align-items: center; height: 45px; padding-left: 19px; }
.nav { width: 18px; height: 18px; margin-right: 22px; fill: none; stroke: #5f6368; stroke-width: 2.1; }
.nav.dim { stroke: #bcbec1; }
.nav .solid { fill: #5f6368; stroke: none; }
.address {
  display: flex;
  align-items: center;
  width: 1474px;
  height: 35px;
  margin-left: -4px;
  padding: 0 13px 0 14px;
  border-radius: 18px;
  background: #f1f3f4;
  font-size: 16.5px;
}
.info { width: 18px; height: 18px; margin-right: 11px; fill: none; stroke: #5f6368; stroke-width: 2; }
.insecure { width: 93px; color: #70757a; letter-spacing: -.02px; }
.address i { width: 2px; height: 20px; margin-right: 11px; background: #8b8f94; }
.url { color: #202124; letter-spacing: -.1px; white-space: nowrap; }
.star { width: 20px; height: 20px; margin-left: auto; fill: none; stroke: #5f6368; stroke-width: 1.8; }
.extensions { display: flex; gap: 20px; margin-left: 17px; }
.extensions svg { width: 20px; height: 20px; }
.rule { width: 1px; height: 20px; margin: 0 18px 0 17px; background: #cdd0d3; }
.queue { width: 20px; height: 20px; }
.avatar { width: 28px; height: 28px; margin: 0 24px 0 16px; }
.dots { width: 4px; height: 18px; fill: #5f6368; }

.bookmarks { display: flex; align-items: center; height: 36px; padding-left: 18px; font-size: 14.5px; letter-spacing: -.18px; white-space: nowrap; }
.bookmarks a { display: flex; align-items: center; gap: 10px; flex: none; width: 83px; line-height: 18px; padding-bottom: 1px; }
.bookmarks svg { width: 20px; height: 20px; }
.bookmarks a:nth-child(2) { width: 89px; }
.bookmarks a:nth-child(3) { width: 108px; }
.bookmarks a:nth-child(4) { width: 87px; }
.bookmarks a:nth-child(5) { width: 88px; }
.bookmarks a:nth-child(6) { width: 115px; letter-spacing: -.1px; }
.bookmarks a:nth-child(7) { width: 100px; }
.bookmarks a:nth-child(8) { width: 192px; letter-spacing: -.4px; }
.bookmarks a:nth-child(9) { width: 190px; letter-spacing: -.05px; }
.bookmarks a:nth-child(10) { width: 82px; }
.bookmarks a:nth-child(11) { width: 97px; }
.bookmarks a:nth-child(12) { width: 193px; letter-spacing: 0; }
.bookmarks a:nth-child(13) { width: 70px; }
.bookmarks a:nth-child(14) { width: 105px; letter-spacing: -.3px; }
.bookmarks a:nth-child(15) { letter-spacing: -.3px; }
.bookmarks b { margin: 0 24px 3px auto; font-weight: 600; font-size: 17px; }

/* Page */
.page { flex: 1; position: relative; }
.banner { height: 97px; background: #ff0; }
.banner h1 { margin: 0; height: 75px; font-size: 40px; line-height: 47px; text-align: center; }
.banner p { margin: 0; font-size: 20px; line-height: 22px; text-align: right; }
.field { height: 75px; padding-top: 24px; }
.field h3 { margin: 0; font-size: 22.5px; line-height: 25px; letter-spacing: .4px; }
.field + .field { height: 74px; }
.select {
  display: flex;
  align-items: center;
  justify-content: space-between;
  width: 287px;
  height: 23px;
  margin-top: 2px;
  padding: 0 8px 0 6px;
  border: 1px solid #a9a9a9;
  font: 16.667px "Liberation Sans", sans-serif;
}
.select i { border: 4px solid transparent; border-top: 7px solid #000; border-bottom: 0; }

.map { position: relative; width: 960px; height: 625px; margin-left: auto; overflow: hidden; font-family: Roboto, sans-serif; }
.tiles { width: 960px; height: 625px; }
.trail { fill: none; stroke: #4fa968; stroke-width: 4.5; stroke-dasharray: 15 9; }
.labels { stroke: #fff; stroke-width: 8; stroke-linejoin: round; paint-order: stroke; }
.city { font-size: 53px; fill: #444; }
.town { font-size: 45px; fill: #666; }
.park { font-size: 51px; fill: #1c8045; }
.metro { font-size: 60px; font-weight: 500; fill: #333; }
.sea { font-size: 39px; fill: #5b83c8; stroke: none; }
.shields text { font-size: 33px; font-weight: 700; fill: #fff; text-anchor: middle; }
.routes rect { fill: #fff; stroke: #666; stroke-width: 4; }
.routes text { font-size: 33px; font-weight: 500; fill: #555; text-anchor: middle; }
.logo { font: 600 77px Lato, sans-serif; stroke: #e4f2fc; stroke-width: 10; paint-order: stroke; }

.map-type {
  position: absolute;
  left: 13px;
  top: 13px;
  display: flex;
  width: 212px;
  height: 50px;
  background: #fff;
  border-radius: 2px;
  box-shadow: 0 1px 5px rgba(0, 0, 0, .3);
  font-size: 22.5px;
  line-height: 48px;
}
.map-type b { width: 88px; padding-left: 21px; border-right: 1px solid #e4e4e4; font-weight: 500; color: #000; }
.map-type span { padding-left: 21px; color: #565656; }
.control {
  position: absolute;
  right: 12px;
  width: 50px;
  display: flex;
  flex-direction: column;
  align-items: center;
  justify-content: center;
  background: #fff;
  border-radius: 2px;
  box-shadow: 0 1px 5px rgba(0, 0, 0, .3);
  fill: none;
  stroke: #666;
}
.control svg { width: 22px; height: 22px; stroke-width: 3; }
.full { top: 13px; height: 50px; }
.pegman { top: 404px; height: 50px; }
.pegman svg { height: 38px; margin-right: 2px; fill: #fbb829; stroke: #8b6a2f; stroke-width: 1; }
.pegman .collar { fill: #dd8127; stroke: none; }
.zoom { top: 494px; height: 101px; gap: 14px; }
.zoom svg { stroke-width: 5; }
.zoom i { width: 37px; height: 1px; background: #e6e6e6; }
.credits {
  position: absolute;
  right: 0;
  bottom: 0;
  display: flex;
  gap: 16px;
  height: 17px;
  padding: 0 8px 0 7px;
  background: rgba(245, 245, 245, .72);
  font-size: 12.5px;
  letter-spacing: -.04px;
  line-height: 17px;
  color: #444;
  white-space: nowrap;
}
footer { padding-right: 13px; font-size: 20px; line-height: 23px; text-align: right; }

/* Windows taskbar */
.taskbar {
  display: flex;
  height: 50px;
  background: #202020;
  color: #fff;
  font-family: "Open Sans", "Noto Sans", sans-serif;
}
.start { width: 60px; padding: 15px 20px; }
.start svg { width: 20px; height: 20px; }
.search {
  display: flex;
  align-items: center;
  gap: 14px;
  width: 430px;
  padding-left: 15px;
  background: #f1f1f1;
  border: 1px solid #bdbdbd;
  color: #333;
  font-size: 18px;
  letter-spacing: -.18px;
}
.search svg { width: 20px; height: 20px; fill: none; stroke: #222; stroke-width: 1.5; }
.apps { display: flex; }
.apps div { position: relative; width: 62px; display: flex; justify-content: center; padding-top: 10px; }
.apps div:nth-child(-n+2) { width: 60px; }
.apps div:nth-child(2) { margin-right: 3px; }
.apps svg { width: 30px; height: 30px; }
.apps .run::after { content: ""; position: absolute; left: 6px; right: 5px; bottom: 0; height: 3px; background: #76b9ed; }
.apps .chrome { width: 61px; margin: 0 1px 0 0; background: #505050; border-right: 5px solid #3b3b3b; }
.apps .chrome svg { margin-left: 3px; }
.apps .chrome::after { left: 0; right: -5px; border-right: 5px solid #568ab2; }
.apps .multi::after { border-right: 10px solid #568ab2; }
.word { font: bold 12px "Open Sans", sans-serif; fill: #fff; }
.apps .mail svg { width: 34px; }
em {
  position: absolute;
  width: 23px;
  height: 23px;
  border: 1px solid #999;
  border-radius: 50%;
  background: #2b2b2b;
  font: 600 14.5px/20px "Open Sans", sans-serif;
  text-align: center;
  color: #fff;
}
.mail em { left: 34px; top: 23px; }
.tray { display: flex; align-items: center; gap: 10px; margin-left: auto; margin-right: 13px; }
.tray svg { width: 20px; height: 20px; }
.clock { width: 66px; display: flex; flex-direction: column; align-items: center; padding-top: 3px; font-size: 14.5px; line-height: 22.500px; letter-spacing: -.38px; white-space: nowrap; }
.notice { position: relative; width: 70px; padding: 15px 0 0 24px; }
.notice svg { width: 21px; height: 20px; }
.notice em { left: 33px; top: 24px; }
.peek { width: 1px; margin-right: 5px; background: #777; }
```
